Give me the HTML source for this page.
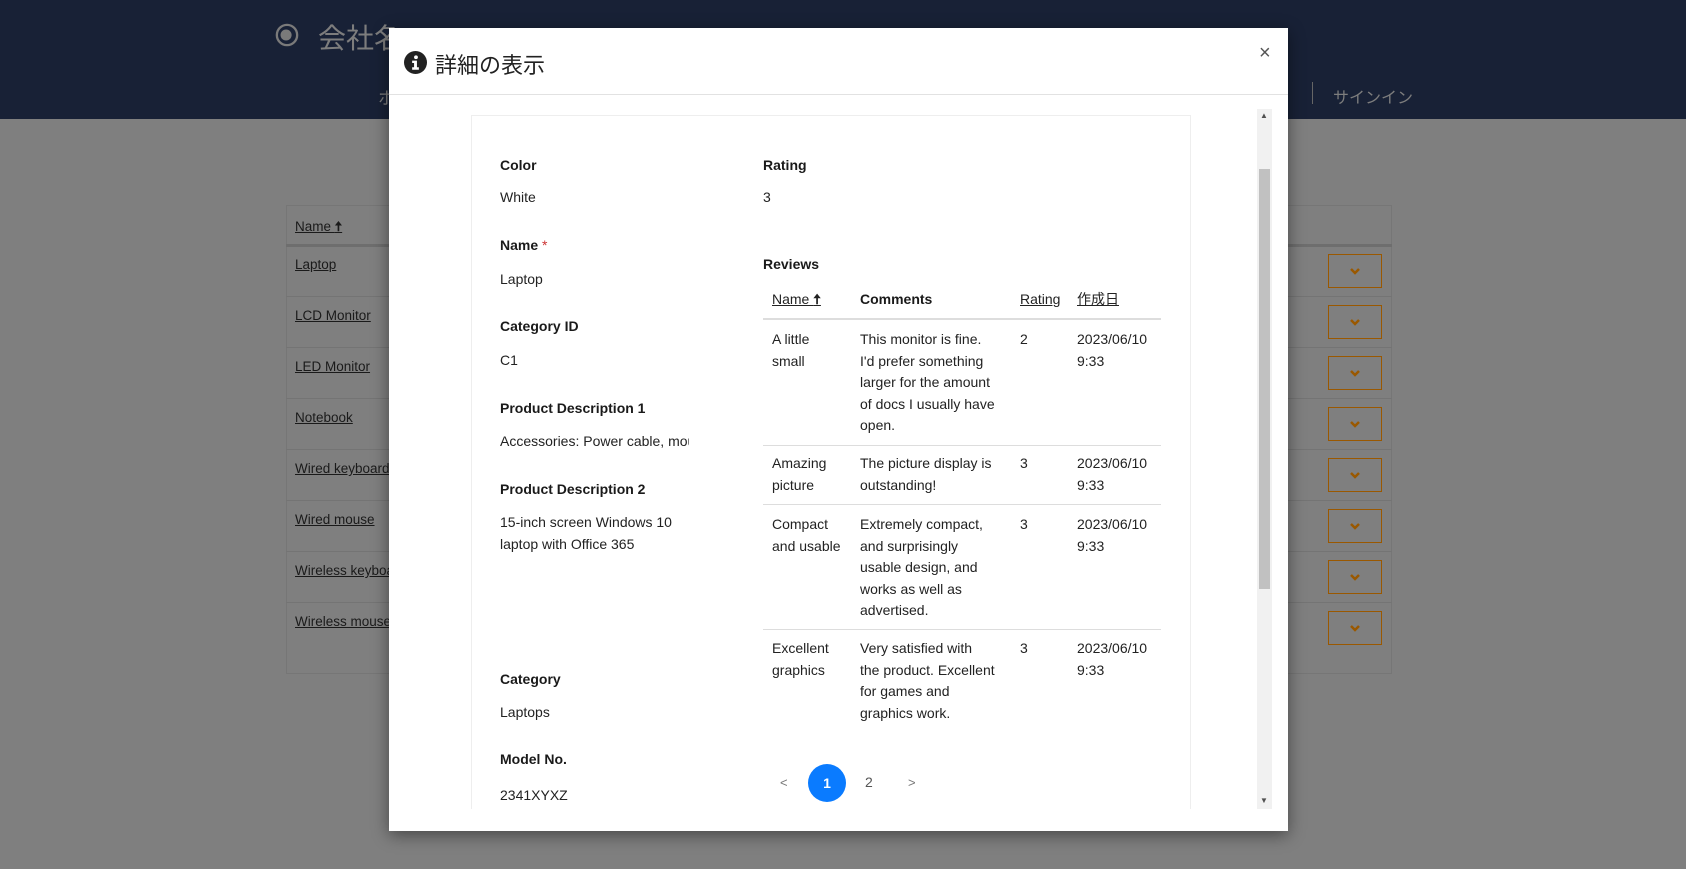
<!DOCTYPE html>
<html><head><meta charset="utf-8"><style>
*{margin:0;padding:0;box-sizing:border-box}
body{width:1686px;height:869px;overflow:hidden;background:#7f7f7f;font-family:"Liberation Sans","Noto Sans CJK JP",sans-serif;position:relative}
.a{position:absolute;white-space:nowrap}
.hdr{position:absolute;left:0;top:0;width:1686px;height:119px;background:#182136}
.lt{color:#1a1a1a;font-size:13.5px;text-decoration:underline}
.row{position:absolute;left:286px;width:1106px;height:1px;background:#747474}
.btn{position:absolute;left:1328px;width:54px;height:34px;border:1.5px solid #9a5800}
.btn svg{position:absolute;left:21px;top:13px}
.modal{position:absolute;left:389px;top:28px;width:899px;height:803px;background:#fff;box-shadow:0 4px 16px rgba(0,0,0,.45)}
.t{position:absolute;white-space:nowrap;font-size:14px;color:#222;line-height:21.5px}
.b{font-weight:bold;color:#1a1a1a}
.u{text-decoration:underline}
</style></head><body>
<div class="hdr">
 <svg class="a" style="left:275px;top:23px" width="24" height="24" viewBox="0 0 26 26"><circle cx="13" cy="13" r="11" fill="none" stroke="#7a7a7a" stroke-width="2.5"/><circle cx="12" cy="13" r="6" fill="#7a7a7a"/></svg>
 <div class="a" style="left:318px;top:17px;font-size:28px;color:#7d7d7d">会社名</div>
 <div class="a" style="left:378px;top:84px;font-size:17px;color:#7d7d7d">ホ</div>
 <div class="a" style="left:1312px;top:82px;width:1px;height:22px;background:#666"></div>
 <div class="a" style="left:1333px;top:84px;font-size:16px;color:#7d7d7d">サインイン</div>
</div>
<div class="a" style="left:286px;top:205px;width:1106px;height:469px;border:1px solid #767676;background:#7f7f7f"></div>
<div class="row" style="top:244px;height:3px;background:#6e6e6e"></div>
<div class="a lt" style="left:295px;top:217px">Name <b>🠅</b></div>
<div class="a lt" style="left:295px;top:257px">Laptop</div>
<div class="row" style="top:296px"></div>
<div class="a lt" style="left:295px;top:308px">LCD Monitor</div>
<div class="row" style="top:347px"></div>
<div class="a lt" style="left:295px;top:359px">LED Monitor</div>
<div class="row" style="top:398px"></div>
<div class="a lt" style="left:295px;top:410px">Notebook</div>
<div class="row" style="top:449px"></div>
<div class="a lt" style="left:295px;top:461px">Wired keyboard</div>
<div class="row" style="top:500px"></div>
<div class="a lt" style="left:295px;top:512px">Wired mouse</div>
<div class="row" style="top:551px"></div>
<div class="a lt" style="left:295px;top:563px">Wireless keyboard</div>
<div class="row" style="top:602px"></div>
<div class="a lt" style="left:295px;top:614px">Wireless mouse</div>
<div class="btn" style="top:254px"><svg width="10" height="7"><path d="M1 1l4 4 4-4" stroke="#9a5800" stroke-width="2.5" fill="none"/></svg></div>
<div class="btn" style="top:305px"><svg width="10" height="7"><path d="M1 1l4 4 4-4" stroke="#9a5800" stroke-width="2.5" fill="none"/></svg></div>
<div class="btn" style="top:356px"><svg width="10" height="7"><path d="M1 1l4 4 4-4" stroke="#9a5800" stroke-width="2.5" fill="none"/></svg></div>
<div class="btn" style="top:407px"><svg width="10" height="7"><path d="M1 1l4 4 4-4" stroke="#9a5800" stroke-width="2.5" fill="none"/></svg></div>
<div class="btn" style="top:458px"><svg width="10" height="7"><path d="M1 1l4 4 4-4" stroke="#9a5800" stroke-width="2.5" fill="none"/></svg></div>
<div class="btn" style="top:509px"><svg width="10" height="7"><path d="M1 1l4 4 4-4" stroke="#9a5800" stroke-width="2.5" fill="none"/></svg></div>
<div class="btn" style="top:560px"><svg width="10" height="7"><path d="M1 1l4 4 4-4" stroke="#9a5800" stroke-width="2.5" fill="none"/></svg></div>
<div class="btn" style="top:611px"><svg width="10" height="7"><path d="M1 1l4 4 4-4" stroke="#9a5800" stroke-width="2.5" fill="none"/></svg></div>

<div class="modal">
 <svg class="a" style="left:15px;top:23px" width="23" height="23" viewBox="0 0 24 24"><circle cx="12" cy="12" r="12" fill="#222"/><circle cx="12.5" cy="6.5" r="2" fill="#fff"/><path d="M8.5 10h5v7h2v2.5h-7V17h2v-4.5h-2z" fill="#fff"/></svg>
 <div class="a" style="left:46px;top:20px;font-size:22px;color:#222">詳細の表示</div>
 <div class="a" style="left:870px;top:14px;font-size:20px;color:#555">×</div>
 <div class="a" style="left:0;top:66px;width:899px;height:1px;background:#e2e2e2"></div>
 <div class="a" style="left:82px;top:87px;width:1px;height:694px;background:#eee"></div>
 <div class="a" style="left:82px;top:87px;width:720px;height:1px;background:#eee"></div>
 <div class="a" style="left:801px;top:87px;width:1px;height:694px;background:#eee"></div>
 <div class="a" style="left:868px;top:81px;width:15px;height:700px;background:#f1f1f1"></div>
 <div class="a" style="left:870px;top:141px;width:11px;height:420px;background:#c1c1c1"></div>
 <div class="a" style="left:871px;top:83px;font-size:8px;color:#505050">▲</div>
 <div class="a" style="left:871px;top:768px;font-size:8px;color:#505050">▼</div>

 <div class="t b" style="left:111px;top:127px">Color</div>
 <div class="t" style="left:111px;top:159px">White</div>
 <div class="t b" style="left:111px;top:207px">Name <span style="color:#c33;font-weight:normal">*</span></div>
 <div class="t" style="left:111px;top:241px">Laptop</div>
 <div class="t b" style="left:111px;top:288px">Category ID</div>
 <div class="t" style="left:111px;top:322px">C1</div>
 <div class="t b" style="left:111px;top:370px">Product Description 1</div>
 <div class="t" style="left:111px;top:403px;width:189px;overflow:hidden">Accessories: Power cable, mouse</div>
 <div class="t b" style="left:111px;top:451px">Product Description 2</div>
 <div class="t" style="left:111px;top:484px">15-inch screen Windows 10<br>laptop with Office 365</div>
 <div class="t b" style="left:111px;top:641px">Category</div>
 <div class="t" style="left:111px;top:674px">Laptops</div>
 <div class="t b" style="left:111px;top:721px">Model No.</div>
 <div class="t" style="left:111px;top:757px">2341XYXZ</div>

 <div class="t b" style="left:374px;top:127px">Rating</div>
 <div class="t" style="left:374px;top:159px">3</div>
 <div class="t b" style="left:374px;top:226px">Reviews</div>
 <div class="t u" style="left:383px;top:261px">Name <b>🠅</b></div>
 <div class="t b" style="left:471px;top:261px">Comments</div>
 <div class="t u" style="left:631px;top:261px">Rating</div>
 <div class="t u" style="left:688px;top:261px">作成日</div>
 <div class="a" style="left:374px;top:290px;width:398px;height:2px;background:#ddd"></div>

 <div class="t" style="left:383px;top:301px">A little<br>small</div>
 <div class="t" style="left:471px;top:301px">This monitor is fine.<br>I'd prefer something<br>larger for the amount<br>of docs I usually have<br>open.</div>
 <div class="t" style="left:631px;top:301px">2</div>
 <div class="t" style="left:688px;top:301px">2023/06/10<br>9:33</div>
 <div class="a" style="left:374px;top:417px;width:398px;height:1px;background:#ddd"></div>

 <div class="t" style="left:383px;top:425px">Amazing<br>picture</div>
 <div class="t" style="left:471px;top:425px">The picture display is<br>outstanding!</div>
 <div class="t" style="left:631px;top:425px">3</div>
 <div class="t" style="left:688px;top:425px">2023/06/10<br>9:33</div>
 <div class="a" style="left:374px;top:476px;width:398px;height:1px;background:#ddd"></div>

 <div class="t" style="left:383px;top:486px">Compact<br>and usable</div>
 <div class="t" style="left:471px;top:486px">Extremely compact,<br>and surprisingly<br>usable design, and<br>works as well as<br>advertised.</div>
 <div class="t" style="left:631px;top:486px">3</div>
 <div class="t" style="left:688px;top:486px">2023/06/10<br>9:33</div>
 <div class="a" style="left:374px;top:601px;width:398px;height:1px;background:#ddd"></div>

 <div class="t" style="left:383px;top:610px">Excellent<br>graphics</div>
 <div class="t" style="left:471px;top:610px">Very satisfied with<br>the product. Excellent<br>for games and<br>graphics work.</div>
 <div class="t" style="left:631px;top:610px">3</div>
 <div class="t" style="left:688px;top:610px">2023/06/10<br>9:33</div>

 <div class="t" style="left:391px;top:744px;color:#777;font-size:13px">&lt;</div>
 <div class="a" style="left:419px;top:736px;width:38px;height:38px;border-radius:50%;background:#0a7bff;color:#fff;font-size:14px;font-weight:bold;text-align:center;line-height:38px">1</div>
 <div class="t" style="left:476px;top:744px;color:#555">2</div>
 <div class="t" style="left:519px;top:744px;color:#777;font-size:13px">&gt;</div>
</div>
</body></html>
